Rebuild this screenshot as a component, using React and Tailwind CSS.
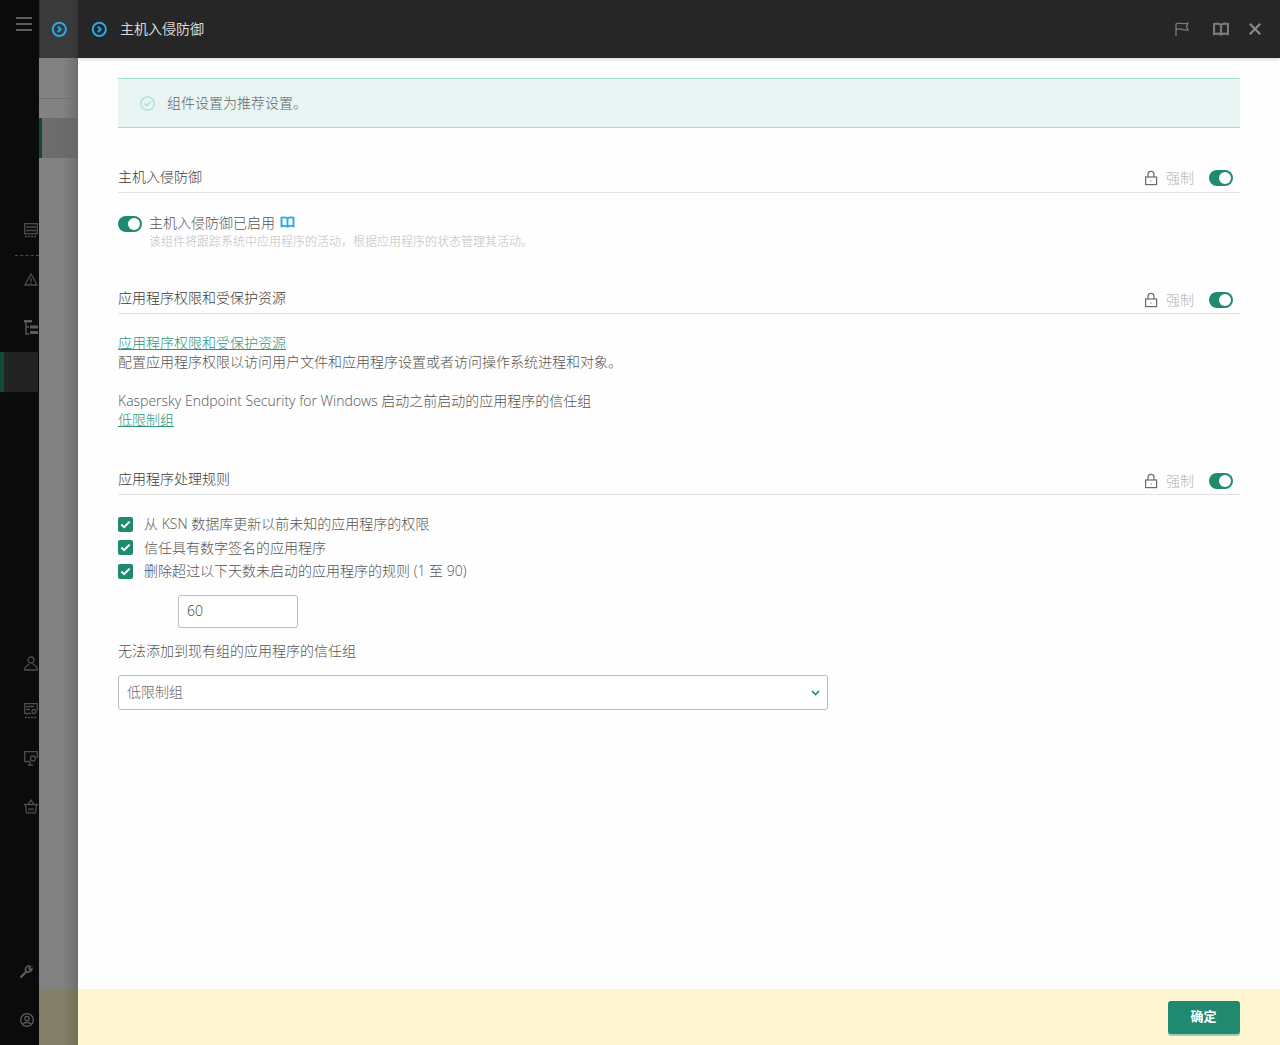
import React from "react";

const FONT = "font-['Open_Sans','Noto_Sans_CJK_SC',sans-serif]";

function Toggle() {
  return (
    <span className="relative inline-block w-6 h-4 rounded-full bg-[#1f8a70] shrink-0">
      <span className="absolute right-[2px] top-[2px] w-3 h-3 rounded-full bg-white" />
    </span>
  );
}

function Chevron() {
  return (
    <svg width="18" height="18" viewBox="0 0 18 18" fill="none">
      <circle cx="9.300" cy="9.300" r="6.600" stroke="#29a9e8" strokeWidth="2" />
      <path d="M7.900 6.600 10.600 9.300 7.900 12" stroke="#29a9e8" strokeWidth="2" />
    </svg>
  );
}

function SectionHead({ title, up, down }) {
  return (
    <div className="flex items-center justify-between h-[28px] border-b border-[#e3e3e3]">
      <span className={`text-sm text-[#3a3a3a] font-light leading-[24px] ${down ? "pb-[2px]" : "pb-[4px]"}`}>{title}</span>
      <div className={`flex items-center pr-[7px] ${up ? "pb-[2px]" : ""} ${down ? "pt-[2px]" : ""}`}>
        <svg width="14" height="16" viewBox="0 0 14 16" fill="none" stroke="#6b6b6b" strokeWidth="1.2">
          <rect x="1.6" y="7" width="11" height="7.6" />
          <path d="M4 7V4.4a3 3 0 0 1 6 0V7" />
          <path d="M7 10.6v.8" />
        </svg>
        <span className="ml-[8px] mr-[15px] text-sm font-light text-[#b5b5b5]">强制</span>
        <Toggle />
      </div>
    </div>
  );
}

function Check({ label }) {
  return (
    <div className="flex items-center h-[23.5px]">
      <span className="w-[15px] h-[15px] rounded-[2px] bg-[#1f8a70] flex items-center justify-center shrink-0">
        <svg width="11" height="9" viewBox="0 0 11 9" fill="none">
          <path d="M1.3 4.5 4.1 7.2 9.6 1.6" stroke="#fff" strokeWidth="2" />
        </svg>
      </span>
      <span className="ml-[11px] text-sm font-light text-[#555]">{label}</span>
    </div>
  );
}

function Icon({ className = "", children, w = 16, h = 16, vb = "0 0 16 16" }) {
  return (
    <svg width={w} height={h} viewBox={vb} fill="none" stroke="#4d4d4d" strokeWidth="1.3" className={className}>
      {children}
    </svg>
  );
}

function Sidebar() {
  return (
    <aside className="w-[39px] h-[1045px] bg-[#0b0b0b] flex flex-col shrink-0">
      <div className="h-[58px] flex justify-center pt-[17px] pl-[9px]">
        <div className="w-4 flex flex-col gap-[4px]">
          <div className="h-[2px] bg-[#5c5c5c]" />
          <div className="h-[2px] bg-[#5c5c5c]" />
          <div className="h-[2px] bg-[#5c5c5c]" />
        </div>
      </div>
      <div className="flex justify-end mt-[165px] pr-[1px]">
        <Icon w={14} h={15} vb="0 0 14 15">
          <rect x="0.7" y="0.7" width="12.6" height="10" />
          <path d="M2 4h10M2 7.500h10" strokeWidth="1.6" />
          <path d="M1 13.500h12" strokeDasharray="2 1" />
        </Icon>
      </div>
      <div className="ml-[15px] mt-[17px] border-t border-dashed border-[#4d4d4d]" />
      <div className="flex justify-end mt-[17px] pr-[1px]">
        <Icon w={14} h={13} vb="0 0 14 13">
          <path d="M7 1 13 12H1Z" />
          <path d="M7 5v4M7 10v1" />
        </Icon>
      </div>
      <div className="flex justify-end mt-[34px] pr-[1px]">
        <svg width="14" height="15" viewBox="0 0 14 15" fill="none" stroke="#5c5c5c">
          <path d="M0 1h8" strokeWidth="3" />
          <path d="M2 2v12h3M2 7h3" strokeWidth="1.3" />
          <path d="M6 7h8M6 12.500h8" strokeWidth="3" />
        </svg>
      </div>
      <div className="h-10 mt-[17px] bg-[#232323] border-l-4 border-[#0f4a3c] mr-[1px]" />
      <div className="flex justify-end mt-[264px] pr-[1px]">
        <Icon w={14} h={15} vb="0 0 14 15">
          <circle cx="7" cy="4" r="3" />
          <path d="M5 7.500C5 9.500 1 10 .8 12v2h12.400v-2C13 10 9 9.500 9 7.500" />
        </Icon>
      </div>
      <div className="flex justify-end mt-[32px] pr-[1px]">
        <Icon w={14} h={16} vb="0 0 14 16">
          <path d="M7 10.500H.7V.7h12.600V7" />
          <path d="M2 3.500h8M2 6.500h4" />
          <circle cx="10" cy="8.500" r="2" />
          <path d="M1 14.500h12" strokeDasharray="2 1" />
        </Icon>
      </div>
      <div className="flex justify-end mt-[32px] pr-[1px]">
        <Icon w={14} h={15} vb="0 0 14 15">
          <path d="M6 10.500H.7V.7h12.600V7" />
          <circle cx="9" cy="7.500" r="2.500" />
          <path d="M4 14h5M6 10.500V14" />
        </Icon>
      </div>
      <div className="flex justify-end mt-[33px] pr-[1px]">
        <Icon w={14} h={15} vb="0 0 14 15">
          <path d="M0 5.500h14M1.500 6l1 7.800h9l1-7.800M4 5.500 7 1l3 4.500M5 9v2.500M7 9v2.500M9 9v2.500" />
        </Icon>
      </div>
      <div className="flex-1" />
      <div className="flex justify-end pr-[6px] mb-[34px]">
        <svg width="14" height="14" viewBox="0 0 14 14" fill="none" stroke="#5c5c5c" strokeWidth="2.400">
          <path d="M1.500 12.500 8 6" />
          <path d="M7 6.500a3.500 3.500 0 0 1 4.500-5L10 3.500l1 1.500 2-1.300A3.500 3.500 0 0 1 8 6.500" strokeWidth="1.500" />
        </svg>
      </div>
      <div className="flex justify-end pr-[5px] mb-[18px]">
        <svg width="14" height="14" viewBox="0 0 14 14" fill="none" stroke="#5c5c5c" strokeWidth="1.300">
          <circle cx="7" cy="7" r="6.300" />
          <circle cx="7" cy="5.500" r="2.200" />
          <path d="M3 11c1-2 7-2 8 0" />
        </svg>
      </div>
    </aside>
  );
}

function BackPanel() {
  return (
    <div className="w-[39px] h-[1045px] shrink-0 flex flex-col bg-gradient-to-r from-[#828282] from-60% to-[#6f6f6f]">
      <div className="h-[58px] bg-[#3a3a3a] flex items-center justify-center border-l border-[#2c2c2c]">
        <Chevron />
      </div>
      <div className="h-[41px] border-b border-[#6e6e6e]" />
      <div className="h-[19px]" />
      <div className="h-10 border-l-[3px] border-[#0f4a3c] bg-gradient-to-r from-[#6e6e6e] to-[#686868]" />
      <div className="flex-1" />
      <div className="h-[56px] bg-gradient-to-r from-[#857f68] from-60% to-[#737059]" />
    </div>
  );
}

export default function App() {
  return (
    <div className={`flex w-[1280px] h-[1045px] overflow-hidden bg-white ${FONT}`}>
      <Sidebar />
      <BackPanel />
      <main className="flex-1 flex flex-col h-[1045px] min-w-0">
        <header className="h-[58px] bg-[#262626] flex items-center pl-[12px] pr-[19px] shadow-[0_1px_4px_rgba(0,0,0,0.2)] shrink-0 relative">
          <Chevron />
          <h1 className="ml-[12px] text-sm font-normal text-[#d9d9d9]">主机入侵防御</h1>
          <div className="flex-1" />
          <svg width="14" height="16" viewBox="0 0 14 16" fill="none" stroke="#7a7a7a" strokeWidth="1.300">
            <path d="M1 15V3c3-2.500 5 1 12-1l-1.500 3.500L13 9C8 10 5 6.500 1 8.500" />
          </svg>
          <svg className="ml-[24px]" width="16" height="14" viewBox="0 0 16 14" fill="none" stroke="#7a7a7a" strokeWidth="2.200">
            <path d="M8 3C6.500 1.500 3 1.500 1 2v10c2-.5 5.500-.5 7 .5 1.500-1 5-1 7-.5V2c-2-.5-5.500-.5-7 1Zm0 0v9.500" />
          </svg>
          <svg className="ml-[20px]" width="12" height="12" viewBox="0 0 12 12" fill="none" stroke="#8a8a8a" strokeWidth="2.200">
            <path d="M.8.8l10.400 10.400M11.200.8.8 11.200" />
          </svg>
        </header>

        <div className="flex-1 bg-[#fefefe] px-10 pt-5 min-h-0">
          <div className="h-[50px] bg-[#e8f5f2] border-y border-[#a0dfd0] flex items-center pl-[22px]">
            <svg width="15" height="15" viewBox="0 0 15 15" fill="none" stroke="#a8e0d3" strokeWidth="1.300">
              <circle cx="7.500" cy="7.500" r="6.700" />
              <path d="M4.500 7.500 6.800 9.800 10.800 5.300" />
            </svg>
            <span className="ml-[12px] text-sm font-light text-[#666]">组件设置为推荐设置。</span>
          </div>

          <div className="mt-[37px]">
            <SectionHead title="主机入侵防御" up />
            <div className="mt-[21px] flex items-center h-[20px]">
              <Toggle />
              <span className="ml-[7px] pb-[2px] text-sm font-light text-[#555]">主机入侵防御已启用</span>
              <svg className="ml-[5px] mb-[4px]" width="15" height="12" viewBox="0 0 16 14" fill="none" stroke="#29a9e8" strokeWidth="2.200">
                <path d="M8 3C6.500 1.500 3 1.500 1 2v10c2-.5 5.500-.5 7 .5 1.500-1 5-1 7-.5V2c-2-.5-5.500-.5-7 1Zm0 0v9.500" />
              </svg>
            </div>
            <p className="ml-[31px] text-xs font-light text-[#bdbdbd] leading-[16px]">该组件将跟踪系统中应用程序的活动，根据应用程序的状态管理其活动。</p>
          </div>

          <div className="mt-[36px]">
            <SectionHead title="应用程序权限和受保护资源" />
            <div className="mt-[18.5px] text-sm font-light text-[#555] leading-[19px]">
              <a className="block text-[#2a9580] underline">应用程序权限和受保护资源</a>
              <p>配置应用程序权限以访问用户文件和应用程序设置或者访问操作系统进程和对象。</p>
              <p className="mt-[20px]">Kaspersky Endpoint Security for Windows 启动之前启动的应用程序的信任组</p>
              <a className="block text-[#2a9580] underline">低限制组</a>
            </div>
          </div>

          <div className="mt-[38px]">
            <SectionHead title="应用程序处理规则" down />
            <div className="mt-[18px]">
              <Check label="从 KSN 数据库更新以前未知的应用程序的权限" />
              <Check label="信任具有数字签名的应用程序" />
              <Check label="删除超过以下天数未启动的应用程序的规则 (1 至 90)" />
            </div>
            <div className="ml-[60px] mt-[12px] w-[120px] h-[33px] border border-[#bdbdbd] rounded-[3px] bg-white flex items-center pl-2 pb-[2px] text-sm font-light text-[#3a3a3a]">60</div>
            <p className="mt-[13px] text-sm font-light text-[#555] leading-[20px]">无法添加到现有组的应用程序的信任组</p>
            <div className="mt-[14px] w-[710px] h-[35px] border border-[#bdbdbd] rounded-[3px] bg-white flex items-center justify-between pl-2 pr-[7px] text-sm font-light text-[#666]">
              <span className="pb-[2px]">低限制组</span>
              <svg width="9" height="6" viewBox="0 0 9 6" fill="none" stroke="#1f8a70" strokeWidth="1.600">
                <path d="M1 1l3.500 3.500L8 1" />
              </svg>
            </div>
          </div>
        </div>

        <footer className="h-[56px] bg-[#fff6d2] flex items-center justify-end pr-10 shrink-0">
          <button className="w-[72px] h-[33px] rounded-[3px] bg-[#1f8a70] shadow-[0_2px_0_#a8c8b0] text-[13px] font-bold text-white pr-[1px]">确定</button>
        </footer>
      </main>
    </div>
  );
}
